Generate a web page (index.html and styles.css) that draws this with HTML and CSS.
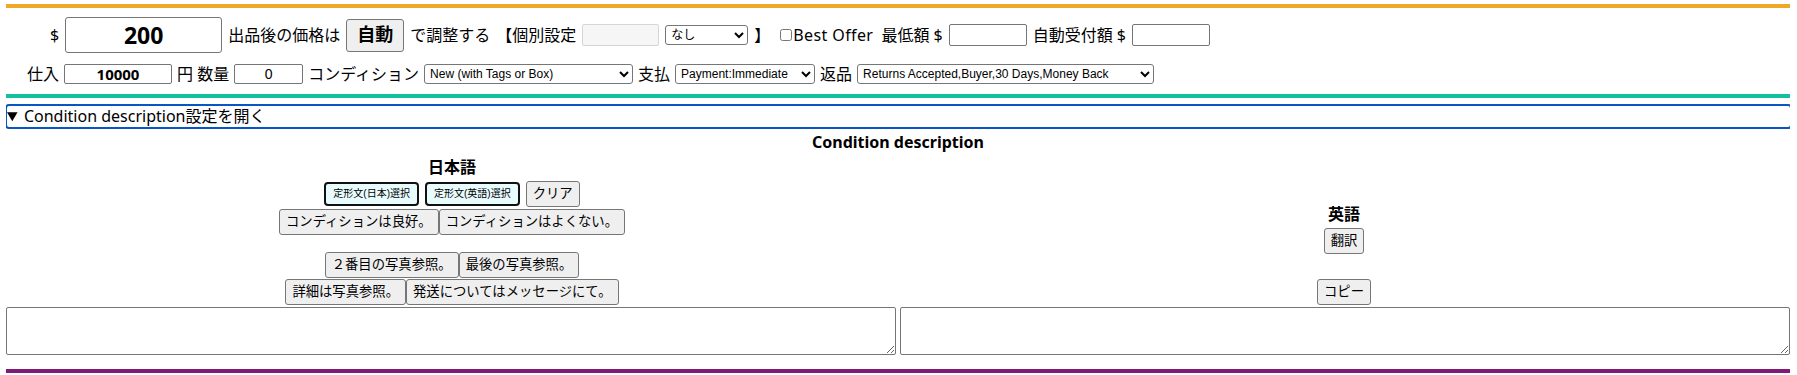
FILE: index.html
```html
<!DOCTYPE html>
<html lang="ja">
<head>
    <meta charset="UTF-8">
    <meta name="viewport" content="width=device-width, initial-scale=1.0">
    <title>出品設定</title>
    <link rel="stylesheet" href="styles.css">
</head>
<body>

<div class="bar bar-orange"></div>

<div class="price-row">
    <span>$</span>
    <input type="text" class="price-input" value="200">
    <span>出品後の価格は</span>
    <button class="auto-button">自動</button>
    <span>で調整する</span>
    <span>【個別設定</span>
    <input type="text" class="small-input disabled-input" disabled>
    <select class="none-select"><option>なし</option></select>
    <span>】</span>
    <label class="offer"><input type="checkbox">Best Offer</label>
    <span>最低額 $</span>
    <input type="text" class="small-input">
    <span>自動受付額 $</span>
    <input type="text" class="small-input">
</div>

<div class="cost-row">
    <span>仕入</span>
    <input type="text" class="cost-input" value="10000">
    <span>円 数量</span>
    <input type="text" class="qty-input" value="0">
    <span>コンディション</span>
    <select class="condition-select"><option>New (with Tags or Box)</option></select>
    <span>支払</span>
    <select class="payment-select"><option>Payment:Immediate</option></select>
    <span>返品</span>
    <select class="returns-select"><option>Returns Accepted,Buyer,30 Days,Money Back</option></select>
</div>

<div class="bar bar-teal"></div>

<details class="condition-box" open>
    <summary>Condition description設定を開く</summary>

    <div class="condition-title">Condition description</div>

    <div class="columns">
        <div class="column">
            <div class="lang-title ja-title">日本語</div>
            <div class="button-row template-row">
                <button class="template-button">定形文(日本)選択</button>
                <button class="template-button">定形文(英語)選択</button>
                <button>クリア</button>
            </div>
            <div class="button-row phrase-row">
                <button>コンディションは良好。</button><button>コンディションはよくない。</button>
            </div>
            <div class="button-row phrase-row spaced">
                <button>２番目の写真参照。</button><button>最後の写真参照。</button>
            </div>
            <div class="button-row phrase-row tight">
                <button>詳細は写真参照。</button><button>発送についてはメッセージにて。</button>
            </div>
        </div>
        <div class="column">
            <div class="lang-title">英語</div>
            <button class="translate-button">翻訳</button>
            <button class="copy-button">コピー</button>
        </div>
    </div>

    <div class="text-row">
        <textarea class="desc-text"></textarea>
        <textarea class="desc-text"></textarea>
    </div>
</details>

<div class="bar bar-purple"></div>

</body>
</html>
```

FILE: styles.css
```css
body {
    margin: 0 7px 0 6px;
    font-family: "Noto Sans", "Noto Sans CJK JP", sans-serif;
    font-size: 16px;
    color: #000000;
    background-color: #ffffff;
}
.bar {
    height: 4px;
}
.bar-orange {
    margin-top: 4px;
    background-color: #efa828;
}
.bar-teal {
    margin-top: 10px;
    background-color: #10c09f;
}
.bar-purple {
    margin-top: 14px;
    background-color: #7e1a78;
}
input, select, textarea {
    box-sizing: border-box;
    font-family: "Liberation Sans", "Noto Sans CJK JP", sans-serif;
    color: #000000;
}
.price-row, .cost-row {
    display: flex;
    align-items: center;
    white-space: nowrap;
    line-height: 20px;
}
.price-row {
    gap: 6px;
    margin-top: 9px;
    padding-left: 44px;
    height: 36px;
}
.cost-row {
    gap: 5px;
    margin-top: 10px;
    padding-left: 21px;
    height: 21px;
}
.price-input {
    width: 157px;
    height: 36px;
    border: 1px solid #767676;
    border-radius: 3px;
    font-family: "Open Sans", sans-serif;
    font-size: 23px;
    font-weight: bold;
    text-align: center;
}
.auto-button {
    height: 33px;
    padding: 0 10px;
    font-size: 18px;
    font-weight: bold;
    line-height: 31px;
}
.small-input {
    width: 78px;
    height: 22px;
    border: 1px solid #767676;
    border-radius: 2px;
}
.disabled-input {
    width: 77px;
    background-color: #f6f6f6;
    border-color: #d6d6d6;
}
.none-select {
    width: 83px;
}
.offer {
    display: flex;
    align-items: center;
    margin-left: 4px;
    margin-right: 2px;
    letter-spacing: 0.4px;
}
.offer input {
    width: 12px;
    height: 12px;
    margin: 0 1px 0 0;
}
.cost-input {
    width: 108px;
    height: 20px;
    border: 1px solid #767676;
    border-radius: 2px;
    font-family: "Open Sans", sans-serif;
    font-size: 15px;
    font-weight: bold;
    text-align: center;
}
.qty-input {
    width: 69px;
    height: 20px;
    border: 1px solid #767676;
    border-radius: 2px;
    font-size: 14px;
    text-align: center;
}
select {
    height: 20px;
    padding: 0 1px;
    font-size: 12px;
    background-color: #ffffff;
    border: 1px solid #767676;
    border-radius: 3px;
}
.condition-select {
    width: 209px;
}
.payment-select {
    width: 140px;
}
.returns-select {
    width: 297px;
}
.condition-box {
    margin-top: 6px;
}
.condition-box summary {
    margin: 0 -2px 0 -1px;
    line-height: 21px;
    border: 2px solid #0a55c4;
    border-radius: 4px;
    cursor: pointer;
}
.condition-title {
    margin-top: 3px;
    line-height: 20px;
    font-weight: bold;
    text-align: center;
}
.columns {
    display: flex;
    align-items: flex-end;
}
.column {
    flex: 1;
    display: flex;
    flex-direction: column;
    align-items: center;
}
.lang-title {
    line-height: 20px;
    font-weight: bold;
}
.ja-title {
    margin-top: 5px;
}
button {
    font-family: "Liberation Sans", "Noto Sans CJK JP", sans-serif;
    font-size: 13.33px;
    line-height: 20px;
    padding: 2px 6px;
    color: #000000;
    background-color: #efefef;
    border: 1px solid #767676;
    border-radius: 3px;
    white-space: nowrap;
}
.button-row {
    display: flex;
    justify-content: center;
    align-items: center;
}
.template-row {
    margin-top: 4px;
    gap: 6px;
}
.template-button {
    font-size: 10px;
    line-height: 14px;
    padding: 3px 7px;
    background-color: #e9fcfd;
    border: 2px solid #111111;
    border-radius: 4px;
}
.phrase-row {
    margin-top: 2px;
}
.phrase-row.spaced {
    margin-top: 17px;
}
.phrase-row.tight {
    margin-top: 1px;
}
.translate-button {
    margin-top: 4px;
}
.copy-button {
    margin-top: 25px;
}
.text-row {
    display: flex;
    gap: 4px;
    margin-top: 2px;
}
.desc-text {
    flex: 1;
    height: 48px;
    border: 1px solid #767676;
    border-radius: 2px;
}
```
